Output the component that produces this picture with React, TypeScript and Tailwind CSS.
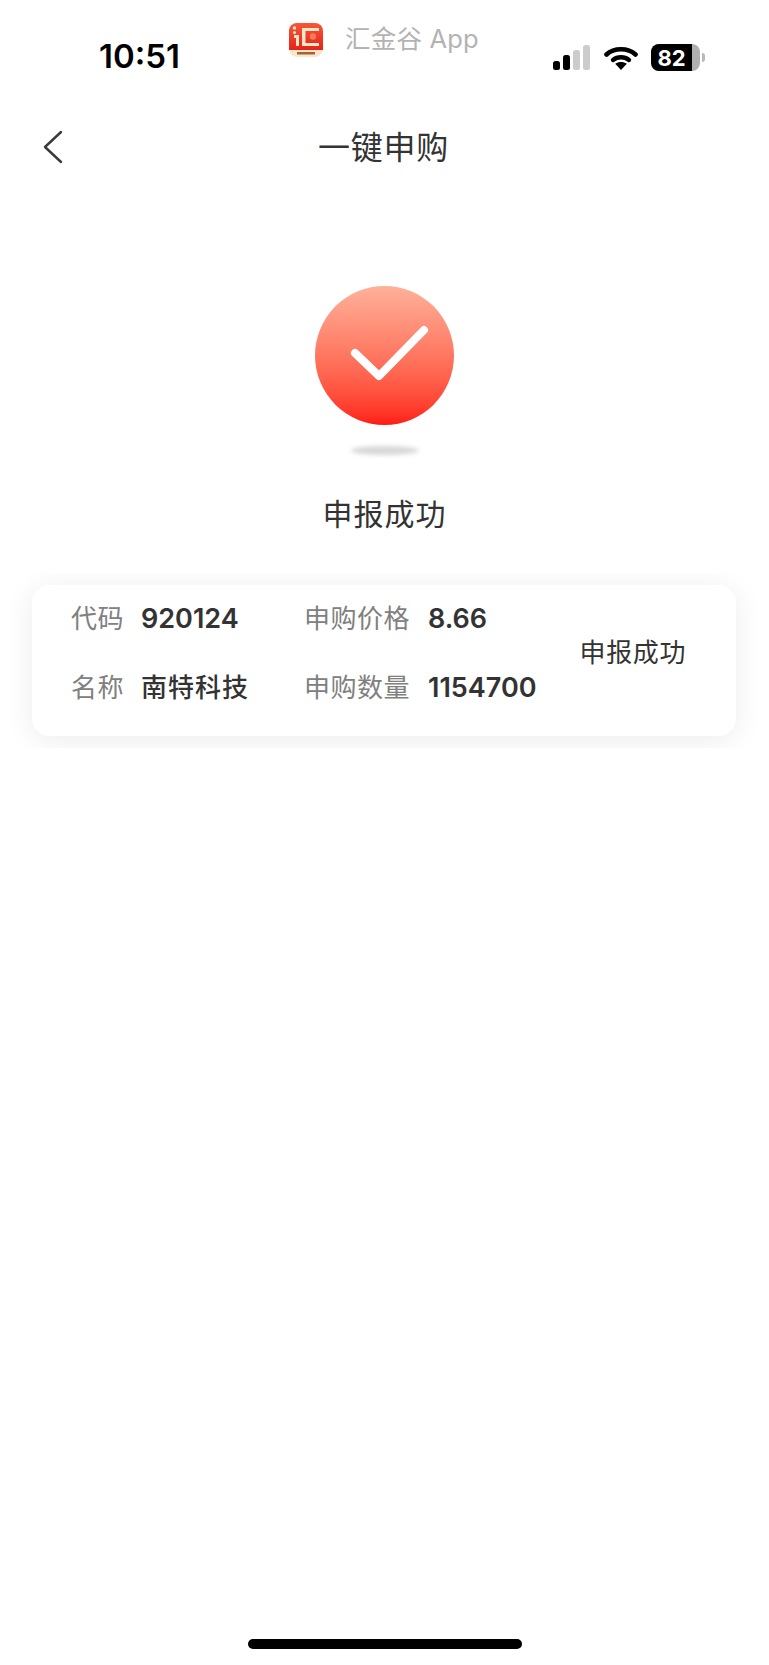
export default function App() {
  return (
    <div className="flex h-[1665px] w-[769px] flex-col overflow-hidden bg-white font-['Inter','Noto_Sans_CJK_SC',sans-serif] text-[#333333]">
      {/* status bar */}
      <div className="flex h-[104px] items-start">
        <div className="ml-[99px] mt-[36px] w-[84px] text-[33px] font-semibold leading-[40px] text-black">10:51</div>
        <div className="ml-[106px] mt-[23px] flex items-start">
          <svg width="34" height="34" viewBox="0 0 34 34">
            <defs>
              <linearGradient id="ic" x1="0" y1="0" x2="0" y2="1">
                <stop offset="0" stopColor="#f4583a" />
                <stop offset="1" stopColor="#e5231b" />
              </linearGradient>
            </defs>
            <rect width="34" height="34" rx="8" fill="#f9e6cf" />
            <path d="M0 8a8 8 0 0 1 8-8h18a8 8 0 0 1 8 8v19H0z" fill="url(#ic)" />
            <path d="M13 5h17v3H16.500v12H30v3H13z" fill="#fbe6c6" />
            <path d="M5 12h5v11H7V15H5z" fill="#fbe6c6" />
            <circle cx="5.500" cy="5" r="1.700" fill="#fbe6c6" />
            <circle cx="5.500" cy="9.500" r="1.500" fill="#fbe6c6" />
            <circle cx="24" cy="13.500" r="3.200" fill="#f7795b" />
            <rect x="8" y="29" width="18" height="2.500" fill="#a5652f" />
          </svg>
          <span className="ml-[22px] mt-[-1px] text-[25.500px] leading-[34px] tracking-[0.2px] text-[#b3b3b3]">汇金谷 App</span>
        </div>
        <div className="ml-auto mr-[64px] mt-[44px] flex items-center">
          <svg width="37" height="25" viewBox="0 0 37 25">
            <rect x="0" y="16" width="7" height="9" rx="2.500" fill="#000" />
            <rect x="10" y="10" width="7" height="15" rx="2.500" fill="#000" />
            <rect x="20" y="5" width="7" height="20" rx="2.500" fill="#cccccc" />
            <rect x="30" y="0" width="7" height="25" rx="2.500" fill="#cccccc" />
          </svg>
          <svg className="ml-[14px]" width="34" height="25" viewBox="0 0 34 25">
            <path d="M2.500 9.500C10 2.500 24 2.500 31.500 9.500" fill="none" stroke="#000" strokeWidth="4.600" strokeLinecap="round" />
            <path d="M9 15c4.500-3.600 11.500-3.600 16 0" fill="none" stroke="#000" strokeWidth="4.400" strokeLinecap="round" />
            <path d="M17 25l-5.800-6.200c3.400-2.300 8.200-2.300 11.600 0z" fill="#000" />
          </svg>
          <div className="relative ml-[13px] flex h-[27px] w-[49px] items-center overflow-hidden rounded-[8px] bg-[#b0b0b0]">
            <div className="flex h-full w-[41px] items-center justify-center bg-black text-[22px] font-bold leading-none text-white">82</div>
          </div>
          <div className="ml-[2px] h-[9px] w-[3px] rounded-r-full bg-[#b8b8b8]" />
        </div>
      </div>

      {/* nav */}
      <div className="relative flex h-[88px] items-center justify-center pr-[2px]">
        <svg className="absolute left-[41px] top-[25px]" width="24" height="36" viewBox="0 0 24 36">
          <path d="M20 3L4 18l16 15" fill="none" stroke="#3a3a3a" strokeWidth="2.400" strokeLinecap="round" strokeLinejoin="round" />
        </svg>
        <span className="text-[32px] leading-[44px] tracking-[0.7px] text-[#333333]">一键申购</span>
      </div>

      {/* result */}
      <div className="mt-[94px] flex flex-col items-center">
        <div className="flex h-[139px] w-[139px] items-center justify-center rounded-full bg-gradient-to-b from-[#ffb09a] to-[#ff1a14]">
          <svg width="139" height="139" viewBox="0 0 139 139">
            <path d="M40 67l24 23 45-46" fill="none" stroke="#fff" strokeWidth="8" strokeLinecap="round" strokeLinejoin="round" />
          </svg>
        </div>
        <div className="mt-[21px] h-[9px] w-[68px] rounded-[50%] bg-[#d8d8d8] blur-[2px]" />
        <div className="mt-[38px] text-[30px] leading-[42px] tracking-[1px] text-[#333333]">申报成功</div>
      </div>

      {/* card */}
      <div className="mt-[38px] overflow-hidden py-[12px] pl-[32px] pr-[33px]">
        <div className="flex h-[151px] items-center rounded-[18px] bg-white pb-[16px] pl-[39px] pr-[50px] shadow-[0_4px_30px_rgba(0,0,0,0.08)]">
          <div className="grid grid-cols-[235px_auto] gap-y-[26px] text-[26px] leading-[43px]">
            <div className="flex">
              <span className="w-[70px] tracking-[0.4px] text-[#808080]">代码</span>
              <span className="text-[27px] font-semibold">920124</span>
            </div>
            <div className="-ml-[2px] flex">
              <span className="w-[124px] tracking-[0.5px] text-[#808080]">申购价格</span>
              <span className="text-[27px] font-semibold">8.66</span>
            </div>
            <div className="flex">
              <span className="w-[70px] tracking-[0.4px] text-[#808080]">名称</span>
              <span className="font-medium tracking-[1px]">南特科技</span>
            </div>
            <div className="-ml-[2px] flex">
              <span className="w-[124px] tracking-[0.5px] text-[#808080]">申购数量</span>
              <span className="text-[27px] font-semibold">1154700</span>
            </div>
          </div>
          <div className="ml-auto text-[26px] leading-[36px] tracking-[0.6px] text-[#333333]">申报成功</div>
        </div>
      </div>

      {/* home indicator */}
      <div className="mt-auto mb-[16px] flex justify-center">
        <div className="h-[10px] w-[274px] rounded-full bg-black" />
      </div>
    </div>
  );
}
